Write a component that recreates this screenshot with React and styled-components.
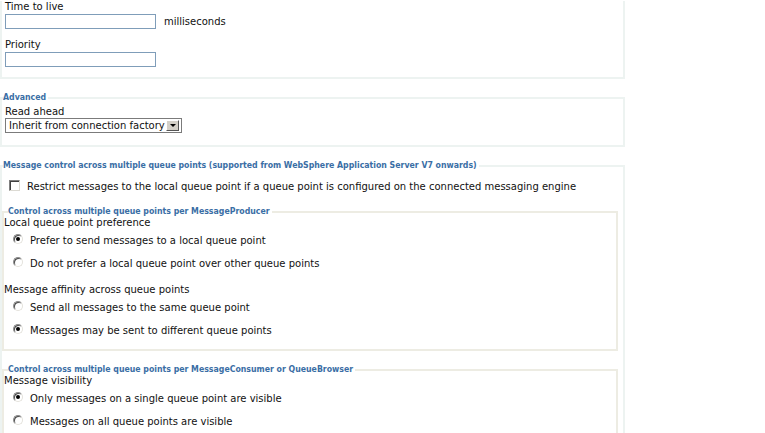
import React from "react";
import styled, { createGlobalStyle } from "styled-components";

const GlobalStyle = createGlobalStyle`
  html, body { margin: 0; padding: 0; background: #fff; }
  body { font-family: "DejaVu Sans", Verdana, sans-serif; font-size: 10px; color: #111; }
`;

const Page = styled.div`
  width: 625px;
  padding-top: 1px;
`;

const Group = styled.fieldset`
  margin: ${(p) => (p.$inner ? "0 5px 0 0" : "0")};
  min-width: 0;
  border: 2px solid ${(p) => (p.$inner ? "#edece3" : "#edf3f1")};
  border-top: ${(p) => (p.$cut ? "none" : undefined)};
  padding: ${(p) => p.$pad || "0"};
  & + & { margin-top: ${(p) => p.$gap || "13px"}; }
`;

const Caption = styled.legend`
  padding: 0 2px 0 0;
  margin-left: ${(p) => p.$indent || "1px"};
  font-family: "DejaVu Sans Condensed", "DejaVu Sans", sans-serif;
  font-stretch: condensed;
  font-weight: bold;
  font-size: 8.7px;
  line-height: 11px;
  color: #3a6ea5;
`;

const Label = styled.div`
  line-height: 12px;
  padding-left: ${(p) => p.$indent || "3px"};
  margin-top: ${(p) => p.$top || "0"};
`;

const InputRow = styled.div`
  display: flex;
  align-items: center;
  gap: 8px;
  padding-left: 3px;
  margin-top: 1px;
`;

const TextBox = styled.div`
  width: 149px;
  height: 13px;
  border: 1px solid #7f9db9;
  background: #fff;
`;

const Select = styled.div`
  display: flex;
  align-items: center;
  width: 172px;
  height: 13px;
  margin: 0 0 0 3px;
  border: 1px solid #7b7b7b;
  padding-left: 3px;
  justify-content: space-between;
  line-height: 12px;
  font-size: 10px;
`;

const DropButton = styled.span`
  width: 11px;
  height: 9px;
  margin-right: 2px;
  background: #d4d0c8;
  border: 1px solid;
  border-color: #fff #555 #555 #fff;
  display: flex;
  align-items: center;
  justify-content: center;
  &::after {
    content: "";
    border-left: 3px solid transparent;
    border-right: 3px solid transparent;
    border-top: 3px solid #000;
  }
`;

const ChoiceRow = styled.div`
  display: flex;
  align-items: center;
  height: ${(p) => p.$h || "23px"};
  padding-left: ${(p) => p.$indent || "9px"};
  gap: 7px;
  line-height: 12px;
`;

const Radio = styled.span`
  position: relative;
  width: 8px;
  height: 8px;
  margin-top: -4px;
  border-radius: 50%;
  border: 1px solid;
  border-color: #8a8a8a #e4e2dc #e4e2dc #8a8a8a;
  box-shadow: inset 1px 1px 0 #4a4a4a;
  background: #fff;
  flex: none;
  &::after {
    content: "";
    display: ${(p) => (p.$on ? "block" : "none")};
    position: absolute;
    left: 2px;
    top: 2px;
    width: 4px;
    height: 4px;
    border-radius: 50%;
    background: #000;
  }
`;

const Check = styled.span`
  width: 9px;
  height: 9px;
  margin-top: -4px;
  border: 1px solid;
  border-color: #808080 #dcdad3 #dcdad3 #808080;
  box-shadow: inset 1px 1px 0 #404040;
  background: #fff;
  flex: none;
`;

const Spacer = styled.div`
  height: ${(p) => p.$h};
`;

export default function App() {
  return (
    <Page>
      <GlobalStyle />
      <Group $cut $pad="0 0 10px 0">
        <Label>Time to live</Label>
        <InputRow>
          <TextBox />
          <span>milliseconds</span>
        </InputRow>
        <Label $top="10px">Priority</Label>
        <InputRow>
          <TextBox />
        </InputRow>
      </Group>

      <Group $gap="15px" $pad="0 0 12px 0">
        <Caption>Advanced</Caption>
        <Label $top="3px">Read ahead</Label>
        <Select>
          <span>Inherit from connection factory</span>
          <DropButton />
        </Select>
      </Group>

      <Group $gap="13px" $pad="0 0 0 0">
        <Caption>Message control across multiple queue points (supported from WebSphere Application Server V7 onwards)</Caption>
        <ChoiceRow $indent="7px" $h="32px">
          <Check />
          <span>Restrict messages to the local queue point if a queue point is configured on the connected messaging engine</span>
        </ChoiceRow>
        <Spacer $h="3px" />
        <Group $inner $pad="0 0 7px 0">
          <Caption $indent="4px">Control across multiple queue points per MessageProducer</Caption>
          <Label $indent="0">Local queue point preference</Label>
          <ChoiceRow>
            <Radio $on />
            <span>Prefer to send messages to a local queue point</span>
          </ChoiceRow>
          <ChoiceRow>
            <Radio />
            <span>Do not prefer a local queue point over other queue points</span>
          </ChoiceRow>
          <Label $indent="0" $top="9px">Message affinity across queue points</Label>
          <ChoiceRow>
            <Radio />
            <span>Send all messages to the same queue point</span>
          </ChoiceRow>
          <ChoiceRow>
            <Radio $on />
            <span>Messages may be sent to different queue points</span>
          </ChoiceRow>
        </Group>
        <Group $inner $gap="13px" $pad="0 0 7px 0">
          <Caption $indent="4px">Control across multiple queue points per MessageConsumer or QueueBrowser</Caption>
          <Label $indent="0">Message visibility</Label>
          <ChoiceRow>
            <Radio $on />
            <span>Only messages on a single queue point are visible</span>
          </ChoiceRow>
          <ChoiceRow>
            <Radio />
            <span>Messages on all queue points are visible</span>
          </ChoiceRow>
        </Group>
      </Group>
    </Page>
  );
}
